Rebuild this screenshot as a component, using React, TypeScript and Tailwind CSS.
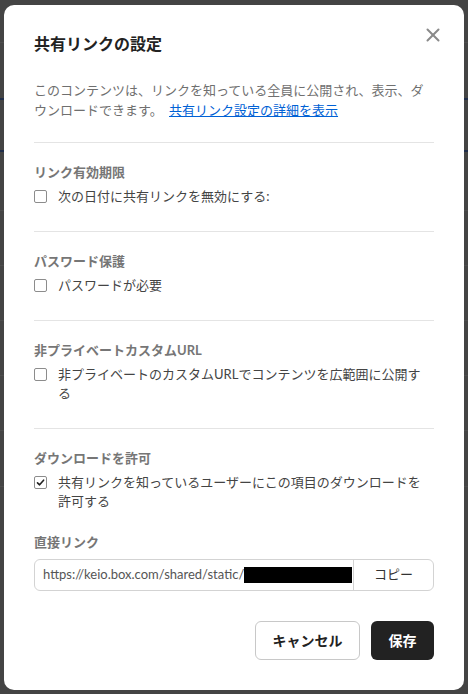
import { X } from "lucide-react"

const font = { fontFamily: 'Lato, "Noto Sans CJK JP", sans-serif' }

function Checkbox({ checked }: { checked?: boolean }) {
    return (
        <span className="mt-[3px] flex h-[13px] w-[13px] shrink-0 items-center justify-center rounded-[2px] border border-[#8c8c8c] bg-white">
            {checked && (
                <svg width="9" height="9" viewBox="0 0 9 9" fill="none">
                    <path d="M1.5 4.8 L3.6 6.8 L7.6 2.2" stroke="#222" strokeWidth="1.6" strokeLinecap="round" strokeLinejoin="round" />
                </svg>
            )}
        </span>
    )
}

function Section({ title, label, checked, className }: { title: string; label: string; checked?: boolean; className?: string }) {
    return (
        <div className={`border-t border-[#e4e4e4] pt-[19px] ${className ?? "pb-[25px]"}`}>
            <div className="text-[13px] font-bold leading-[20px] text-[#767676]">{title}</div>
            <label className="mt-[5px] flex items-start gap-[11px] pr-[10px]">
                <Checkbox checked={checked} />
                <span className="flex-1 text-[13px] leading-[19px] text-[#444]">{label}</span>
            </label>
        </div>
    )
}

export default function App() {
    return (
        <div className="relative h-[694px] w-[468px] overflow-hidden bg-[#444]" style={font}>
            {/* page behind the overlay */}
            <div className="flex flex-col">
                <div className="h-[43px] border-b border-[#4d4d4d]" />
                <div className="h-[57px] border-b-2 border-[#1f2d4a]" />
                <div className="h-[52px] border-b-2 border-[#1f2d4a]" />
                <div className="h-[59px] border-b border-[#4d4d4d]" />
                <div className="h-[55px] border-b border-[#4d4d4d]" />
                <div className="h-[55px] border-b border-[#4d4d4d]" />
                <div className="h-[55px] border-b border-[#4d4d4d]" />
                <div className="h-[55px] border-b border-[#4d4d4d]" />
                <div className="h-[56px] border-b border-[#4d4d4d]" />
            </div>

            <div className="absolute left-[4px] top-[5px] flex h-[685px] w-[460px] flex-col rounded-[10px] bg-white px-[30px] pt-[27px]">
                <button className="absolute right-[20px] top-[19px] text-[#8a8a8a]">
                    <X size={22} strokeWidth={2.2} />
                </button>

                <h2 className="text-[16px] font-bold leading-[24px] text-[#222]">共有リンクの設定</h2>

                <p className="mt-[24px] text-[13px] leading-[20px] text-[#6f6f6f]">
                    このコンテンツは、リンクを知っている全員に公開され、表示、ダウンロードできます。{" "}
                    <a href="#" className="ml-[3px] text-[#0061d5] underline">共有リンク設定の詳細を表示</a>
                </p>

                <div className="mt-[22px] flex flex-col">
                    <Section title="リンク有効期限" label="次の日付に共有リンクを無効にする:" />
                    <Section title="パスワード保護" label="パスワードが必要" />
                    <Section
                        title="非プライベートカスタムURL"
                        label="非プライベートのカスタムURLでコンテンツを広範囲に公開する"
                    />
                    <Section
                        title="ダウンロードを許可"
                        label="共有リンクを知っているユーザーにこの項目のダウンロードを許可する"
                        checked
                        className="pb-[0px]"
                    />
                </div>

                <div className="mt-[21px] text-[13px] font-bold leading-[20px] text-[#767676]">直接リンク</div>
                <div className="mt-[7px] flex h-[32px] overflow-hidden rounded-[6px] border border-[#d3d3d3]">
                    <div className="flex flex-1 items-center pl-[8px] text-[13px] text-[#555]">
                        <span>https://keio.box.com/shared/static/</span>
                        <span className="h-[16px] w-[108px] bg-black" />
                    </div>
                    <button className="w-[80px] border-l border-[#d3d3d3] text-[13px] text-[#333]">コピー</button>
                </div>

                <div className="mt-[30px] flex justify-end gap-[11px]">
                    <button className="h-[39px] w-[105px] rounded-[6px] border border-[#c8c8c8] bg-white text-[14px] font-bold text-[#222]">
                        キャンセル
                    </button>
                    <button className="h-[39px] w-[63px] rounded-[6px] bg-[#222] text-[14px] font-bold text-white">
                        保存
                    </button>
                </div>
            </div>
        </div>
    )
}
